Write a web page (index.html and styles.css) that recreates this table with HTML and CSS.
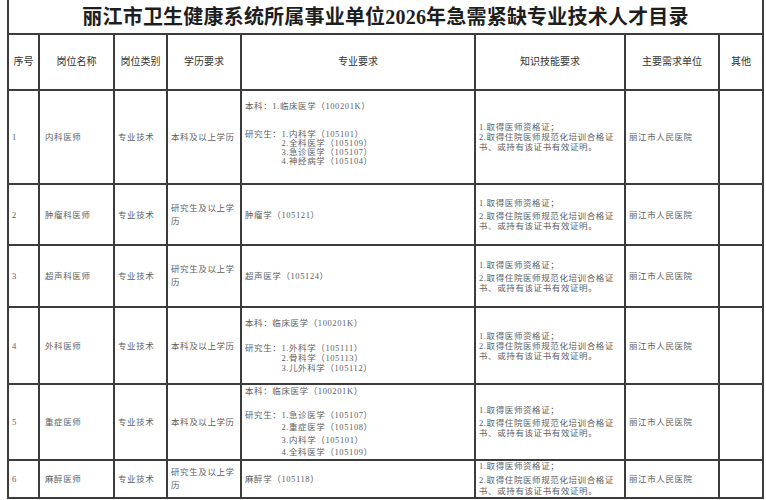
FILE: index.html
```html
<!DOCTYPE html>
<html lang="zh-CN">
<head>
<meta charset="utf-8">
<title>丽江市卫生健康系统所属事业单位2026年急需紧缺专业技术人才目录</title>
<link rel="stylesheet" href="styles.css">
</head>
<body>
<table class="catalog">
  <colgroup>
    <col class="c-no"><col class="c-name"><col class="c-type"><col class="c-edu"><col class="c-major"><col class="c-skill"><col class="c-unit"><col class="c-other">
  </colgroup>
  <thead>
    <tr class="title-row"><th colspan="8" class="title">丽江市卫生健康系统所属事业单位2026年急需紧缺专业技术人才目录</th></tr>
    <tr class="head-row">
      <th>序号</th><th>岗位名称</th><th>岗位类别</th><th>学历要求</th><th>专业要求</th><th>知识技能要求</th><th>主要需求单位</th><th>其他</th>
    </tr>
  </thead>
  <tbody>
    <tr class="row r1">
      <td class="no">1</td><td class="name">内科医师</td><td>专业技术</td><td>本科及以上学历</td>
      <td class="major major-1">
        <div class="ug">本科：1.临床医学（100201K）</div>
        <div class="grad"><span class="label">研究生：</span><div class="list"><div>1.内科学（105101）</div><div>2.全科医学（105109）</div><div>3.急诊医学（105107）</div><div>4.神经病学（105104）</div></div></div>
      </td>
      <td class="skill"><div>1.取得医师资格证；</div><div>2.取得住院医师规范化培训合格证<br>书、或持有该证书有效证明。</div></td>
      <td>丽江市人民医院</td><td></td>
    </tr>
    <tr class="row r2">
      <td class="no">2</td><td class="name">肿瘤科医师</td><td>专业技术</td><td class="edu2">研究生及以上学<br>历</td>
      <td class="major">肿瘤学（105121）</td>
      <td class="skill gap"><div>1.取得医师资格证；</div><div>2.取得住院医师规范化培训合格证<br>书、或持有该证书有效证明。</div></td>
      <td>丽江市人民医院</td><td></td>
    </tr>
    <tr class="row r3">
      <td class="no">3</td><td class="name">超声科医师</td><td>专业技术</td><td class="edu2">研究生及以上学<br>历</td>
      <td class="major">超声医学（105124）</td>
      <td class="skill gap"><div>1.取得医师资格证；</div><div>2.取得住院医师规范化培训合格证<br>书、或持有该证书有效证明。</div></td>
      <td>丽江市人民医院</td><td></td>
    </tr>
    <tr class="row r4">
      <td class="no">4</td><td class="name">外科医师</td><td>专业技术</td><td>本科及以上学历</td>
      <td class="major major-4">
        <div class="ug">本科：临床医学（100201K）</div>
        <div class="grad"><span class="label">研究生：</span><div class="list"><div>1.外科学（105111）</div><div>2.骨科学（105113）</div><div>3.儿外科学（105112）</div></div></div>
      </td>
      <td class="skill"><div>1.取得医师资格证；</div><div>2.取得住院医师规范化培训合格证<br>书、或持有该证书有效证明。</div></td>
      <td>丽江市人民医院</td><td></td>
    </tr>
    <tr class="row r5">
      <td class="no">5</td><td class="name">重症医师</td><td>专业技术</td><td>本科及以上学历</td>
      <td class="major major-5">
        <div class="ug">本科：临床医学（100201K）</div>
        <div class="grad"><span class="label">研究生：</span><div class="list"><div>1.急诊医学（105107）</div><div>2.重症医学（105108）</div><div>3.内科学（105101）</div><div>4.全科医学（105109）</div></div></div>
      </td>
      <td class="skill gap"><div>1.取得医师资格证；</div><div>2.取得住院医师规范化培训合格证<br>书、或持有该证书有效证明。</div></td>
      <td>丽江市人民医院</td><td></td>
    </tr>
    <tr class="row r6">
      <td class="no">6</td><td class="name">麻醉医师</td><td>专业技术</td><td class="edu2">研究生及以上学<br>历</td>
      <td class="major">麻醉学（105118）</td>
      <td class="skill gap"><div>1.取得医师资格证；</div><div>2.取得住院医师规范化培训合格证<br>书、或持有该证书有效证明。</div></td>
      <td>丽江市人民医院</td><td></td>
    </tr>
  </tbody>
</table>
</body>
</html>
```

FILE: styles.css
```css
html, body {
  margin: 0;
  padding: 0;
  background: #ffffff;
}

body {
  padding: 0 4px 0 7px;
}

.catalog {
  width: 755px;
  table-layout: fixed;
  border-collapse: collapse;
  font-family: "Liberation Serif", "Noto Sans CJK SC", serif;
  font-size: 8.5px;
  color: #5e5e5e;
  letter-spacing: 0.6px;
}

.c-no { width: 31px; }
.c-name { width: 75px; }
.c-type { width: 53px; }
.c-edu { width: 74px; }
.c-major { width: 234px; }
.c-skill { width: 150px; }
.c-unit { width: 94px; }
.c-other { width: 44px; }

.catalog th,
.catalog td {
  border: 2px solid #3c3c3c;
  padding: 0 3px;
  vertical-align: middle;
  text-align: left;
  line-height: 10px;
  overflow: hidden;
}

.catalog .title-row th {
  border-top: none;
  height: 33px;
  padding: 0;
  text-align: center;
  font-family: "Liberation Serif", "Noto Sans CJK SC", serif;
  font-size: 20px;
  font-weight: 700;
  letter-spacing: 0.2px;
  line-height: 26px;
  color: #1e1e1e;
}

.catalog .head-row th {
  height: 54px;
  text-align: center;
  font-family: "Liberation Sans", "Noto Sans CJK SC", sans-serif;
  font-size: 10px;
  font-weight: 400;
  letter-spacing: 0;
  color: #333333;
}

.catalog td.no { padding-left: 3px; }
.catalog td.name { padding-left: 5px; }

.r1 td { height: 92px; }
.r2 td { height: 59px; }
.r3 td { height: 60px; }
.r4 td { height: 75px; }
.r5 td { height: 73px; }
.r6 td { height: 36px; }

.catalog td.edu2 { line-height: 13px; }

.ug { margin-bottom: 18px; }

.grad {
  display: flex;
}

.grad .label { flex: none; }

.catalog td.major-1 { line-height: 9px; }
.major-1 .ug { margin-bottom: 19px; }
.major-1 .grad { margin-bottom: 6px; }

.major-4 .ug { margin-bottom: 15px; }

.catalog td.major-5 { line-height: 12.5px; }
.major-5 .ug { margin-bottom: 11px; }

.skill.gap div:first-child { margin-bottom: 3px; }

.catalog .r6 td.skill { line-height: 11px; }
```
